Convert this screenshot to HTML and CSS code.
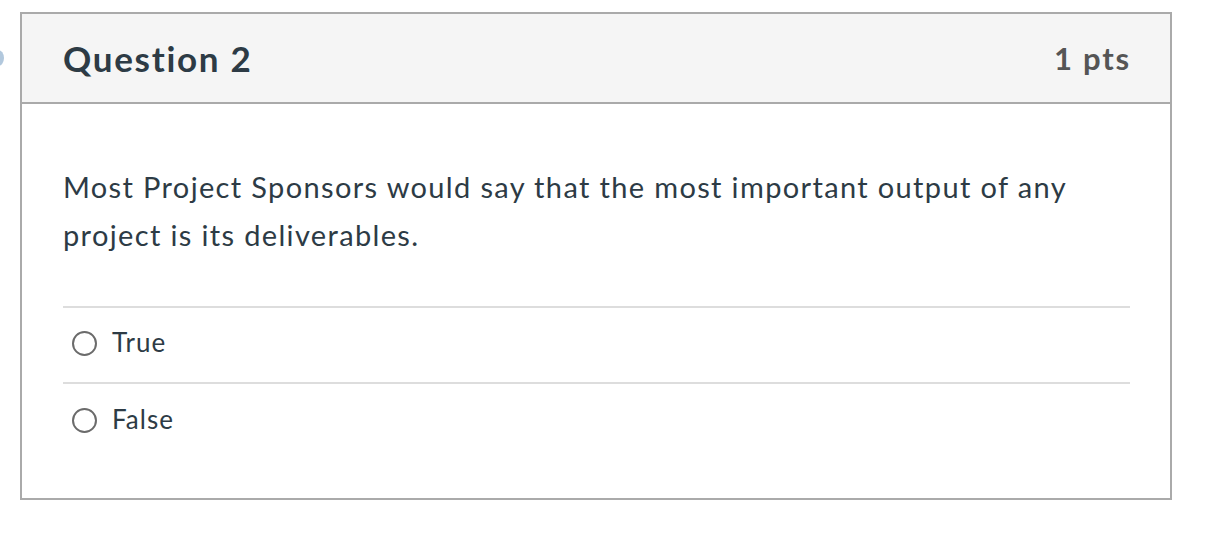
FILE: index.html
```html
<!DOCTYPE html>
<html>
<head>
<meta charset="utf-8">
<link rel="stylesheet" href="styles.css">
</head>
<body>
<div class="page">
  <span class="dot"></span>
  <div class="question">
    <div class="header">
      <h2 class="title">Question 2</h2>
      <span class="pts">1 pts</span>
    </div>
    <div class="body">
      <p class="text">Most Project Sponsors would say that the most important output of any project is its deliverables.</p>
      <div class="answers">
        <label class="answer"><span class="radio"></span><span class="label">True</span></label>
        <label class="answer"><span class="radio"></span><span class="label">False</span></label>
      </div>
    </div>
  </div>
</div>
</body>
</html>
```
FILE: styles.css
```css
html, body {
  margin: 0;
  padding: 0;
  background: #fff;
}
body {
  font-family: Lato, "Open Sans", sans-serif;
  color: #2d3b45;
}
.page {
  position: relative;
  padding: 12px 0 0 20px;
}
.dot {
  position: absolute;
  left: -8px;
  top: 50px;
  width: 12px;
  height: 16px;
  border-radius: 50%;
  background: #7fa3c7;
  opacity: 0.6;
}
.question {
  width: 1148px;
  height: 484px;
  border: 2px solid #aaaaaa;
  background: #fff;
}
.header {
  height: 88px;
  background: #f5f5f5;
  border-bottom: 2px solid #aaaaaa;
  display: flex;
  align-items: center;
  justify-content: space-between;
  padding: 0 41px 0 41px;
}
.title {
  margin: 0;
  font-size: 35px;
  font-weight: 700;
  letter-spacing: 1.7px;
  color: #2d3b45;
}
.pts {
  font-size: 31px;
  font-weight: 700;
  letter-spacing: 1.8px;
  margin-right: -2px;
  color: #555555;
}
.body {
  padding: 59px 40px 0 41px;
}
.text {
  margin: 0;
  font-size: 29px;
  line-height: 48px;
  letter-spacing: 1.35px;
  width: 1030px;
}
.answers {
  margin-top: 47px;
  border-top: 2px solid #dddddd;
}
.answer {
  display: flex;
  align-items: center;
  height: 76px;
  box-sizing: border-box;
  padding: 0 0 4px 9px;
  border-bottom: 2px solid #dddddd;
}
.answer:last-child {
  border-bottom: none;
}
.radio {
  width: 21px;
  height: 21px;
  border: 2px solid #6b6b6b;
  border-radius: 50%;
  box-sizing: content-box;
}
.label {
  margin-left: 15px;
  font-size: 26px;
  letter-spacing: 1px;
  position: relative;
  top: -1px;
}
```
